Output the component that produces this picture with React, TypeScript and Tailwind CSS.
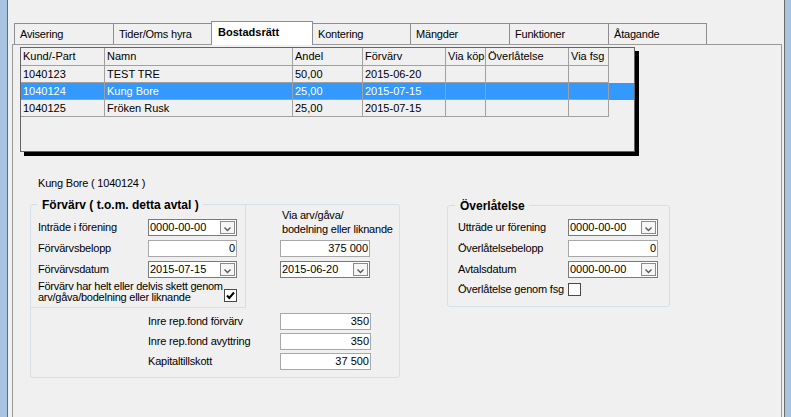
import React from "react";

const tabs: { label: string; w: string; selected?: boolean }[] = [
  { label: "Avisering", w: "w-[100px]" },
  { label: "Tider/Oms hyra", w: "w-[99px]" },
  { label: "Bostadsrätt", w: "w-[102px]", selected: true },
  { label: "Kontering", w: "w-[99px]" },
  { label: "Mängder", w: "w-[100px]" },
  { label: "Funktioner", w: "w-[100px]" },
  { label: "Åtagande", w: "w-[99px]" },
];

const colW = [
  "w-[84px]",
  "w-[188px]",
  "w-[70px]",
  "w-[83px]",
  "w-[40px]",
  "w-[83px]",
  "w-[40px]",
];

const header = ["Kund/-Part", "Namn", "Andel", "Förvärv", "Via köp", "Överlåtelse", "Via fsg"];
const rows: { cells: string[]; sel?: boolean }[] = [
  { cells: ["1040123", "TEST TRE", "50,00", "2015-06-20", "", "", ""] },
  { cells: ["1040124", "Kung Bore", "25,00", "2015-07-15", "", "", ""], sel: true },
  { cells: ["1040125", "Fröken Rusk", "25,00", "2015-07-15", "", "", ""] },
];

function DateBox({ value, w }: { value: string; w: string }) {
  return (
    <div className={`flex h-[17px] ${w} items-center border border-[#7a7a7a] bg-white`}>
      <span className="flex-1 pl-[1px] leading-[13px]">{value}</span>
      <div className="mr-[1px] flex h-[13px] w-[15px] items-end justify-center border border-[#8a8a8a] bg-[#f6f6f6]">
        <svg width="9" height="6" viewBox="0 0 9 6" className="mb-[1px]">
          <path d="M1.5 1.5 L4.5 4.5 L7.5 1.5" fill="none" stroke="#5a5a5a" strokeWidth="1.4" />
        </svg>
      </div>
    </div>
  );
}

function NumBox({ value, w }: { value: string; w: string }) {
  return (
    <div className={`flex h-[17px] ${w} items-center justify-end border border-[#a8a8a8] bg-white pr-[1px]`}>
      <span className="leading-[13px]">{value}</span>
    </div>
  );
}

function CheckBox({ checked }: { checked?: boolean }) {
  return (
    <div className="flex h-[13px] w-[13px] shrink-0 items-center justify-center border border-[#4a4a4a] bg-white">
      {checked && (
        <svg width="11" height="11" viewBox="0 0 11 11">
          <path d="M2 5.5 L4.3 8 L9 2.5" fill="none" stroke="#000" strokeWidth="2" />
        </svg>
      )}
    </div>
  );
}

function Label({ children, w }: { children: React.ReactNode; w: string }) {
  return <span className={`${w} shrink-0 whitespace-nowrap tracking-[-0.2px]`}>{children}</span>;
}

export default function App() {
  return (
    <div className="flex h-[417px] w-[791px] overflow-hidden bg-[#f0f0f0] font-['Liberation_Sans',Arial,sans-serif] text-[11px] leading-[13px] text-black">
      <div className="w-[7px] shrink-0 bg-[#a9c3e2]" />
      <div className="w-px shrink-0 bg-[#6b6b6b]" />
      <div className="flex w-[776px] shrink-0 flex-col">
        <div className="h-[21px]" />
        <div className="ml-[6px] flex h-[24px] items-end">
          {tabs.map((t, i) =>
            t.selected ? (
              <div
                key={t.label}
                className={`relative z-10 -ml-px h-[24px] ${t.w} border-l border-r border-t border-[#8c8e94] bg-white pl-[6px] pt-[3px] font-bold leading-[14px]`}
              >
                {t.label}
              </div>
            ) : (
              <div
                key={t.label}
                className={`${i > 0 ? "-ml-px" : ""} h-[22px] ${t.w} border-l border-r border-t border-[#8c8e94] bg-[#f0f0f0] pl-[5px] pt-[3px] leading-[14px] tracking-[-0.2px]`}
              >
                {t.label}
              </div>
            )
          )}
        </div>
        <div className="-mt-px ml-[4px] flex w-[770px] flex-1 flex-col border-l border-r border-t border-[#9a9a9a]">
          {/* Grid */}
          <div className="ml-[7px] mt-[2px] h-[105px] w-[615px] border border-[#646464] bg-[#f0f0f0] shadow-[4px_4px_0_#000]">
            <div className="flex h-[18px]">
              {header.map((h, i) => (
                <div
                  key={h}
                  className={`${colW[i]} flex shrink-0 items-center overflow-hidden whitespace-nowrap border-b border-r border-[#a0a0a0] pl-[2px]`}
                >
                  {h}
                </div>
              ))}
            </div>
            {rows.map((r) => (
              <div key={r.cells[0]} className={`flex h-[17px] ${r.sel ? "bg-[#3399ff] text-white" : ""}`}>
                {r.cells.map((c, i) => (
                  <div
                    key={i}
                    className={`${colW[i]} flex shrink-0 items-center overflow-hidden whitespace-nowrap border-b border-r border-[#a0a0a0] pl-[2px]`}
                  >
                    {c}
                  </div>
                ))}
                <div className="flex-1" />
              </div>
            ))}
          </div>

          <div className="ml-[25px] mt-[25px] tracking-[-0.2px]">Kung Bore ( 1040124 )</div>

          <div className="mt-[14px] flex items-start">
            {/* Förvärv */}
            <div className="relative ml-[17px] h-[174px] w-[370px] rounded-[3px] border border-[#d5dfe5]">
              <div className="absolute left-[6px] top-[-7px] bg-[#f0f0f0] pl-[5px] pr-[4px] text-[12px] font-bold leading-[14px]">
                Förvärv ( t.o.m. detta avtal )
              </div>
              <div className="flex">
                <div className="flex h-[103px] w-[215px] flex-col border-b border-r border-[#d5dfe5] pl-[7px] pr-[8px] pt-[14px]">
                  <div className="flex h-[17px] items-center">
                    <Label w="w-[110px]">Inträde i förening</Label>
                    <DateBox value="0000-00-00" w="w-[91px]" />
                  </div>
                  <div className="mt-[4px] flex h-[17px] items-center">
                    <Label w="w-[110px]">Förvärvsbelopp</Label>
                    <NumBox value="0" w="w-[91px]" />
                  </div>
                  <div className="mt-[4px] flex h-[17px] items-center">
                    <Label w="w-[110px]">Förvärvsdatum</Label>
                    <DateBox value="2015-07-15" w="w-[91px]" />
                  </div>
                  <div className="mt-[3px] flex items-end justify-between">
                    <span className="whitespace-nowrap leading-[11px] tracking-[-0.25px]">
                      Förvärv har helt eller delvis skett genom
                      <br />
                      arv/gåva/bodelning eller liknande
                    </span>
                    <div className="mb-px">
                      <CheckBox checked />
                    </div>
                  </div>
                </div>
                <div className="flex flex-1 flex-col pl-[34px]">
                  <div className="whitespace-nowrap pl-[2px] pt-[3px] leading-[14px] tracking-[-0.2px]">
                    Via arv/gåva/
                    <br />
                    bodelning eller liknande
                  </div>
                  <div className="mt-[4px] flex flex-col gap-[4px]">
                    <NumBox value="375 000" w="w-[90px]" />
                    <DateBox value="2015-06-20" w="w-[90px]" />
                  </div>
                </div>
              </div>
              <div className="flex flex-col gap-[3px] pl-[117px] pt-[5px]">
                <div className="flex h-[17px] items-center">
                  <Label w="w-[132px]">Inre rep.fond förvärv</Label>
                  <NumBox value="350" w="w-[91px]" />
                </div>
                <div className="flex h-[17px] items-center">
                  <Label w="w-[132px]">Inre rep.fond avyttring</Label>
                  <NumBox value="350" w="w-[91px]" />
                </div>
                <div className="flex h-[17px] items-center">
                  <Label w="w-[132px]">Kapitaltillskott</Label>
                  <NumBox value="37 500" w="w-[91px]" />
                </div>
              </div>
            </div>

            {/* Överlåtelse */}
            <div className="relative ml-[47px] mt-[1px] h-[102px] w-[223px] rounded-[3px] border border-[#d5dfe5]">
              <div className="absolute left-[7px] top-[-7px] bg-[#f0f0f0] pl-[5px] pr-[4px] text-[12px] font-bold leading-[14px]">
                Överlåtelse
              </div>
              <div className="flex flex-col gap-[4px] pl-[10px] pt-[13px]">
                <div className="flex h-[17px] items-center">
                  <Label w="w-[110px]">Utträde ur förening</Label>
                  <DateBox value="0000-00-00" w="w-[90px]" />
                </div>
                <div className="flex h-[17px] items-center">
                  <Label w="w-[110px]">Överlåtelsebelopp</Label>
                  <NumBox value="0" w="w-[90px]" />
                </div>
                <div className="flex h-[17px] items-center">
                  <Label w="w-[110px]">Avtalsdatum</Label>
                  <DateBox value="0000-00-00" w="w-[90px]" />
                </div>
                <div className="flex h-[15px] items-center">
                  <Label w="w-[110px]">Överlåtelse genom fsg</Label>
                  <CheckBox />
                </div>
              </div>
            </div>
          </div>
        </div>
      </div>
      <div className="w-px shrink-0 bg-[#6b6b6b]" />
      <div className="w-[6px] shrink-0 bg-[#a9c3e2]" />
    </div>
  );
}
